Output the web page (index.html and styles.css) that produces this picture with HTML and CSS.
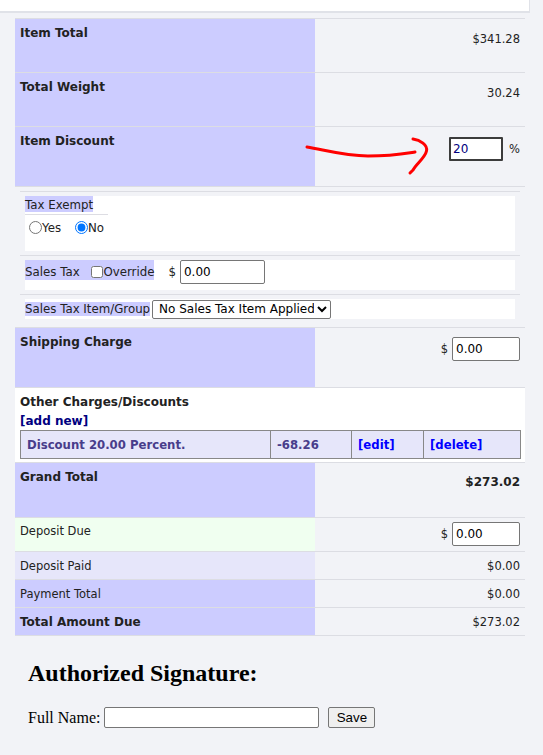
FILE: index.html
```html
<!DOCTYPE html>
<html>
<head>
<meta charset="utf-8">
<link rel="stylesheet" href="styles.css">
</head>
<body>
<div class="page">
  <div class="topbar"></div>
  <div class="main">
    <div class="row h54">
      <div class="lbl">Item Total</div>
      <div class="val">$341.28</div>
    </div>
    <div class="row h54">
      <div class="lbl">Total Weight</div>
      <div class="val">30.24</div>
    </div>
    <div class="row h60">
      <div class="lbl">Item Discount</div>
      <div class="val val-input disc"><input class="disc-in" type="text" value="20"><span>%</span></div>
    </div>
    <div class="row-full tax">
      <div class="tblk">
        <div class="white w1">
          <div class="taxhead"><span class="hl">Tax Exempt</span></div>
          <div class="radios">
            <label class="rlab"><input type="radio" name="te">Yes</label>
            <label class="rlab"><input type="radio" name="te" checked>No</label>
          </div>
        </div>
      </div>
      <div class="tblk">
        <div class="white w2">
          <span class="hl hl2">Sales Tax <input class="chk" type="checkbox">Override</span>
          <span class="dollar">$</span>
          <input class="txt stax" type="text" value="0.00">
        </div>
      </div>
      <div class="tblk">
        <div class="white w3">
          <span class="hl hl3">Sales Tax Item/Group</span>
          <select class="sel"><option>No Sales Tax Item Applied</option></select>
        </div>
      </div>
    </div>
    <div class="row h60">
      <div class="lbl">Shipping Charge</div>
      <div class="val val-input ship"><span>$</span><input class="txt money" type="text" value="0.00"></div>
    </div>
    <div class="row-full other">
      <div class="oth-title">Other Charges/Discounts</div>
      <div class="oth-add"><a class="navy">[add new]</a></div>
      <table class="charges">
        <colgroup>
          <col class="c1"><col class="c2"><col class="c3"><col class="c4">
        </colgroup>
        <tr>
          <td>Discount 20.00 Percent.</td>
          <td>-68.26</td>
          <td><a class="blue">[edit]</a></td>
          <td><a class="blue">[delete]</a></td>
        </tr>
      </table>
    </div>
    <div class="row h55">
      <div class="lbl">Grand Total</div>
      <div class="val bold">$273.02</div>
    </div>
    <div class="row h34">
      <div class="lbl green reg">Deposit Due</div>
      <div class="val val-input dep"><span>$</span><input class="txt money" type="text" value="0.00"></div>
    </div>
    <div class="row h28 mid">
      <div class="lbl light reg">Deposit Paid</div>
      <div class="val">$0.00</div>
    </div>
    <div class="row h28 mid">
      <div class="lbl reg">Payment Total</div>
      <div class="val">$0.00</div>
    </div>
    <div class="row h28 mid">
      <div class="lbl">Total Amount Due</div>
      <div class="val">$273.02</div>
    </div>
  </div>
  <div class="sig">
    <h2 class="sig-title">Authorized Signature:</h2>
    <div class="sig-form">
      <span class="sig-label">Full Name:</span>
      <input class="sig-input" type="text">
      <button class="sig-btn" type="button">Save</button>
    </div>
  </div>
  <svg class="arrow" width="543" height="200" viewBox="0 0 543 200">
    <path d="M307 147 C 325 150, 345 156, 368 156 S 402 154, 415 152" fill="none" stroke="#ff0000" stroke-width="3" stroke-linecap="round"/>
    <path d="M413 139 C 420 140, 428 145, 426.5 151 C 425 158, 416 164, 413 170 L 410 173" fill="none" stroke="#ff0000" stroke-width="3" stroke-linecap="round" stroke-linejoin="round"/>
  </svg>
</div>
</body>
</html>
```
FILE: styles.css
```css
body {
  margin: 0;
  background: #f2f3f7;
  font-family: "DejaVu Sans", Verdana, sans-serif;
  font-size: 11.5px;
  line-height: 14px;
  color: #222;
}
.page {
  position: relative;
  width: 543px;
  height: 755px;
  overflow: hidden;
}
.topbar {
  width: 529px;
  height: 11px;
  background: #fff;
  border-right: 1px solid #e0e2e8;
  border-bottom: 2px solid #e0e2e8;
}
.main {
  margin: 5px 0 0 15px;
  width: 510px;
  border-bottom: 1px solid #dcdde3;
}
.row {
  display: grid;
  grid-template-columns: 300px 210px;
  border-top: 1px solid #dcdde3;
  box-sizing: border-box;
}
.h54 { height: 54px; }
.h55 { height: 55px; }
.h60 { height: 60px; }
.h34 { height: 34px; }
.h28 { height: 28px; }
.lbl {
  background: #ccccff;
  padding: 7px 5px 0;
  font-weight: bold;
  font-size: 12px;
}
.lbl.reg { font-weight: normal; font-size: 11.5px; }
.lbl.green { background: #f0fff0; padding-top: 6px; }
.lbl.light { background: #e6e6fa; }
.val {
  text-align: right;
  padding: 13px 5px 0;
}
.val.bold { font-weight: bold; font-size: 12px; padding-top: 12px; }
.mid .lbl, .mid .val {
  padding-top: 0;
  display: flex;
  align-items: center;
}
.mid .val { justify-content: flex-end; }
.val-input {
  display: flex;
  justify-content: flex-end;
  align-items: center;
  align-self: start;
  gap: 4px;
}
.disc { padding-top: 10px; gap: 6px; }
.ship { padding-top: 9px; }
.dep { padding-top: 4px; }
.disc-in {
  box-sizing: border-box;
  width: 54px;
  height: 24px;
  margin: 0;
  border: 2px solid #3c3c3c;
  border-radius: 1px;
  padding: 1px 2px;
  font: 12px "DejaVu Sans", Verdana, sans-serif;
  color: #000080;
  background: #fff;
  outline: none;
}
.txt {
  box-sizing: border-box;
  height: 24px;
  margin: 0;
  border: 1px solid #767676;
  border-radius: 2px;
  padding: 1px 3px;
  font: 12px "DejaVu Sans", Verdana, sans-serif;
  color: #000;
  background: #fff;
}
.money { width: 68px; }
.stax { width: 85px; }

.row-full {
  border-top: 1px solid #dcdde3;
}
.tax { padding: 4px 5px; font-size: 11.8px; }
.tblk {
  border-top: 1px solid #dcdde3;
  padding: 4px 5px;
}
.white { background: #fff; }
.w1 { height: 55px; box-sizing: border-box; }
.taxhead {
  width: 83px;
  border-bottom: 1px solid #dddde3;
  padding-bottom: 2px;
}
.hl {
  background: #ccccff;
  display: inline-block;
}
.taxhead .hl { line-height: 14px; padding-top: 2px; }
.radios {
  display: flex;
  align-items: center;
  padding-top: 6px;
  height: 13px;
}
.rlab {
  display: inline-flex;
  align-items: center;
  margin-right: 10px;
}
.rlab input {
  margin: 0 0 0 4px;
  width: 13px;
  height: 13px;
}
.w2 {
  height: 30px;
  display: flex;
  align-items: flex-start;
}
.hl2 {
  height: 20px;
  line-height: 14px;
  padding-top: 5px;
  box-sizing: border-box;
  display: inline-flex;
  align-items: flex-start;
  white-space: pre;
}
.chk {
  margin: 1px 0 0 8px;
  width: 12px;
  height: 12px;
}
.dollar {
  line-height: 24px;
  margin: 0 4px 0 14px;
}
.w3 {
  height: 20px;
  display: flex;
  align-items: center;
}
.hl3 { line-height: 14px; }
.sel {
  box-sizing: border-box;
  width: 179px;
  height: 19px;
  margin: 0 0 0 2px;
  padding: 0 0 0 2px;
  font: 12px "DejaVu Sans", Verdana, sans-serif;
  color: #000;
  border: 1px solid #767676;
  border-radius: 2px;
  background: #fff;
}

.other {
  background: #fff;
  padding: 5px 5px 3px;
  font-weight: bold;
  font-size: 12px;
  line-height: 19px;
}
.oth-add { line-height: 18px; }
.navy { color: #000080; }
.blue { color: #0000ff; }
.charges {
  border-collapse: collapse;
  table-layout: fixed;
  width: 500px;
  background: #e6e6fa;
  font-size: 11.7px;
  line-height: 14px;
  color: #483d8b;
}
.charges td {
  border: 1px solid #888;
  height: 27px;
  padding: 0 6px;
  white-space: nowrap;
  overflow: hidden;
}
.c1 { width: 250px; }
.c2 { width: 81px; }
.c3 { width: 72px; }
.c4 { width: 97px; }

.sig {
  padding: 4px 28px 0;
  font-family: "Liberation Serif", "Times New Roman", serif;
  color: #000;
  font-size: 16px;
  line-height: normal;
}
.sig-title {
  font-size: 24px;
  font-weight: bold;
  margin: 20px 0 20px;
}
.sig-form {
  display: flex;
  align-items: center;
}
.sig-label { margin-right: 4px; }
.sig-input {
  box-sizing: border-box;
  width: 215px;
  height: 21px;
  margin: 0 9px 0 0;
  border: 1px solid #767676;
  border-radius: 2px;
  background: #fff;
}
.sig-btn {
  box-sizing: border-box;
  width: 47px;
  height: 21px;
  padding: 0;
  border: 1px solid #767676;
  border-radius: 2px;
  background: #efefef;
  font: 13.33px "Liberation Sans", Arial, sans-serif;
  color: #000;
}
.arrow {
  position: absolute;
  left: 0;
  top: 0;
  pointer-events: none;
}
```
